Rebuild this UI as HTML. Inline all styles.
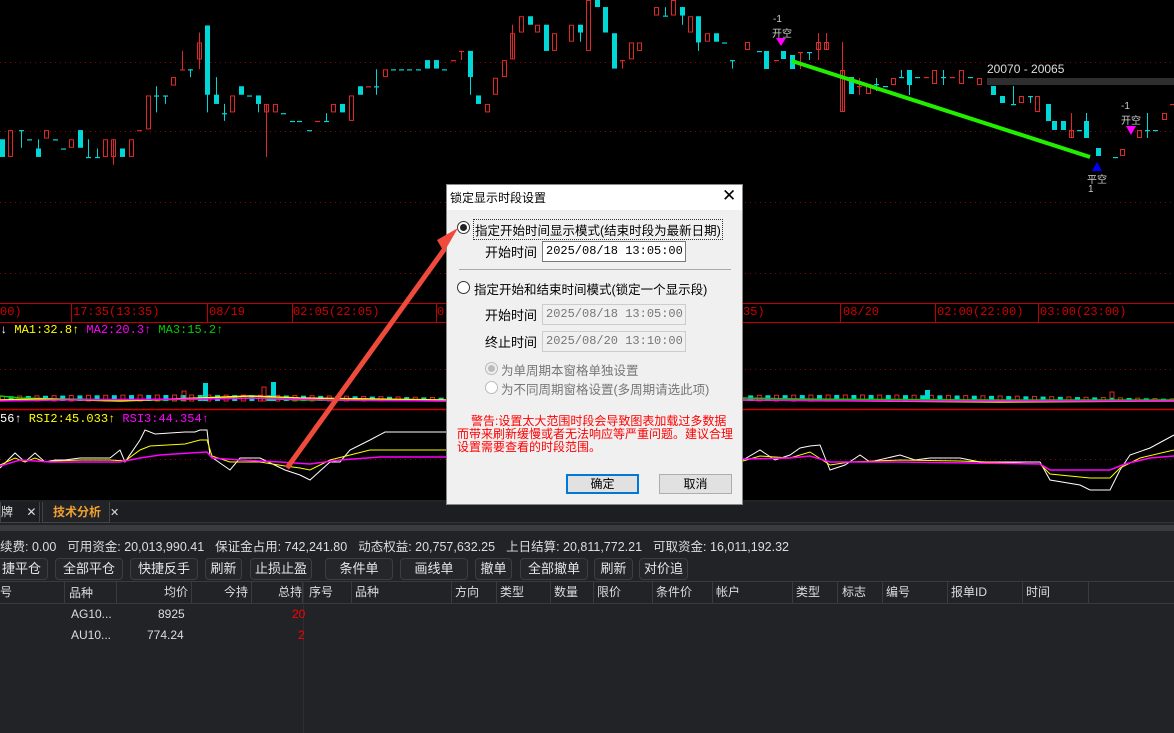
<!DOCTYPE html>
<html><head><meta charset="utf-8">
<style>
*{margin:0;padding:0;box-sizing:border-box}
body{width:1174px;height:733px;overflow:hidden;background:#000;position:relative;font-family:"Liberation Sans","Noto Sans CJK SC",sans-serif}
.a{position:absolute;white-space:nowrap}
.m{font-family:"Liberation Mono","Noto Sans CJK SC",monospace;font-size:12px}
#bot{position:absolute;left:0;top:500px;width:1174px;height:233px;background:#222327}
.btn{position:absolute;top:558px;height:22px;border:1px solid #3d3e42;border-radius:4px;background:#25262a;color:#e6e6e6;font-size:13px;text-align:center;line-height:20px}
.th{position:absolute;top:582px;height:21px;color:#ddd;font-size:12px;line-height:20px;border-right:1px solid #3a3b3f}
.dlg{position:absolute;left:446px;top:184px;width:297px;height:321px;background:#f0f0f0;border:1px solid #888}
.dt{font-size:13px;color:#000}
.inp{position:absolute;height:21px;border:1px solid #7a7a7a;background:#fff;font-family:"Liberation Mono",monospace;font-size:12px;line-height:19px;padding-left:3px}
.dis{border-color:#ccc;background:#f0f0f0;color:#777}
</style></head><body>
<svg id="ch" class="a" style="left:0;top:0" width="1174" height="500" xmlns="http://www.w3.org/2000/svg">
<g stroke="#8b0000" stroke-dasharray="1,4" stroke-width="1">
<line x1="0" y1="62.5" x2="1174" y2="62.5"/><line x1="0" y1="131.5" x2="1174" y2="131.5"/>
<line x1="0" y1="202.5" x2="1174" y2="202.5"/><line x1="0" y1="273.5" x2="1174" y2="273.5"/>
<line x1="0" y1="369.5" x2="1174" y2="369.5"/><line x1="0" y1="459.5" x2="1174" y2="459.5"/>
</g>
<g stroke="#c00000" stroke-width="1">
<line x1="0" y1="303.5" x2="1174" y2="303.5"/><line x1="0" y1="322.5" x2="1174" y2="322.5"/>
<line x1="71.5" y1="303" x2="71.5" y2="322"/><line x1="207.5" y1="303" x2="207.5" y2="322"/>
<line x1="292.5" y1="303" x2="292.5" y2="322"/><line x1="436.5" y1="303" x2="436.5" y2="322"/>
<line x1="840.5" y1="303" x2="840.5" y2="322"/><line x1="935.5" y1="303" x2="935.5" y2="322"/>
<line x1="1038.5" y1="303" x2="1038.5" y2="322"/>
</g>
<line x1="0" y1="409.5" x2="1174" y2="409.5" stroke="#d00000" stroke-width="1.5"/>
<g id="cd"></g>
<g id="vol"></g>
<rect x="987" y="78" width="187" height="7" fill="#2e2e2e"/>
<line x1="792" y1="61" x2="1090" y2="157" stroke="#22ee00" stroke-width="4"/>
<polygon points="776,38 786,38 781,46" fill="#ff00ff"/>
<polygon points="1126,126 1136,126 1131,135" fill="#ff00ff"/>
<polygon points="1092,171 1102,171 1097,162" fill="#0000ff"/>
<polyline fill="none" stroke="#fff" stroke-width="1" points="0,468 15,453 25,462 35,453 45,462 55,460 65,460 80,458 95,458 110,458 120,450 125,462 140,440 145,430 155,434 185,432 195,432 200,430 207,430 210,456 230,470 240,458 260,458 285,470 300,475 310,480 330,462 340,462 350,450 370,440 385,432 446,432"/>
<polyline fill="none" stroke="#ffff00" stroke-width="1" points="0,465 15,458 25,462 35,458 45,462 55,461 80,460 110,460 125,461 140,450 150,446 185,444 200,440 207,440 212,456 230,462 260,462 285,466 300,468 310,470 330,460 350,455 370,450 446,450"/>
<polyline fill="none" stroke="#ff00ff" stroke-width="1.5" points="0,466 20,460 50,462 90,462 120,462 140,458 160,455 190,453 207,452 212,458 240,460 280,462 310,464 340,460 380,457 446,457"/>
<polyline fill="none" stroke="#fff" stroke-width="1" points="743,460 760,450 775,460 790,455 800,448 810,446 820,445 830,470 845,465 860,455 870,462 900,455 915,460 930,458 960,458 980,462 1040,462 1050,480 1080,485 1090,490 1110,490 1120,470 1130,455 1150,448 1174,435"/>
<polyline fill="none" stroke="#ffff00" stroke-width="1" points="743,461 760,456 790,458 810,452 830,465 850,462 900,460 960,461 1040,464 1050,474 1090,478 1110,478 1120,468 1140,458 1174,450"/>
<polyline fill="none" stroke="#ff00ff" stroke-width="1.5" points="743,459 790,458 810,456 830,462 900,462 1040,464 1050,470 1110,470 1125,464 1150,458 1174,456"/>
<line x1="287" y1="468" x2="446" y2="247" stroke="#ef4a3c" stroke-width="5"/>
</svg>
<div class="a m" style="left:0;top:305px;color:#d00000">00)</div>
<div class="a m" style="left:73px;top:305px;color:#d00000">17:35(13:35)</div>
<div class="a m" style="left:209px;top:305px;color:#d00000">08/19</div>
<div class="a m" style="left:293px;top:305px;color:#d00000">02:05(22:05)</div>
<div class="a m" style="left:437px;top:305px;color:#d00000">0</div>
<div class="a m" style="left:743px;top:305px;color:#d00000">35)</div>
<div class="a m" style="left:843px;top:305px;color:#d00000">08/20</div>
<div class="a m" style="left:937px;top:305px;color:#d00000">02:00(22:00)</div>
<div class="a m" style="left:1040px;top:305px;color:#d00000">03:00(23:00)</div>
<div class="a m" style="left:0;top:323px"><span style="color:#fff">↓</span><span style="color:#ff0"> MA1:32.8↑</span><span style="color:#f0f"> MA2:20.3↑</span><span style="color:#0c0"> MA3:15.2↑</span></div>
<div class="a m" style="left:0;top:412px"><span style="color:#fff">56↑</span><span style="color:#ff0"> RSI2:45.033↑</span><span style="color:#f0f"> RSI3:44.354↑</span></div>
<div class="a" style="left:987px;top:62px;color:#ddd;font-size:12px;font-family:'Liberation Sans',sans-serif">20070 - 20065</div>
<div class="a" style="left:773px;top:14px;color:#ccc;font-size:10px">-1</div>
<div class="a" style="left:772px;top:25px;color:#ccc;font-size:10px">开空</div>
<div class="a" style="left:1121px;top:101px;color:#ccc;font-size:10px">-1</div>
<div class="a" style="left:1121px;top:112px;color:#ccc;font-size:10px">开空</div>
<div class="a" style="left:1087px;top:171px;color:#ccc;font-size:10px">平空</div>
<div class="a" style="left:1088px;top:184px;color:#ccc;font-size:10px">1</div>

<div id="bot"></div>
<div class="a" style="left:0;top:502px;width:1174px;height:21px;background:#1d1e21;border-bottom:1px solid #333"></div>
<div class="a" style="left:0;top:502px;width:40px;height:21px;border:1px solid #444;border-top:none;color:#ddd;font-size:12px;line-height:20px">牌 <span style="margin-left:10px">✕</span></div>
<div class="a" style="left:42px;top:502px;width:68px;height:21px;border:1px solid #444;border-top:none;color:#f0a030;font-size:12px;font-weight:bold;line-height:20px;padding-left:10px;width:68px;background:#222327">技术分析</div>
<div class="a" style="left:110px;top:506px;color:#ddd;font-size:11px">✕</div>
<div class="a" style="left:0;top:525px;width:1174px;height:6px;background:#3a3b3f"></div>
<div class="a" style="left:0;top:536px;color:#ddd;font-size:12.5px;word-spacing:0">续费: 0.00<span style="margin-left:11px">可用资金: 20,013,990.41</span><span style="margin-left:11px">保证金占用: 742,241.80</span><span style="margin-left:11px">动态权益: 20,757,632.25</span><span style="margin-left:11px">上日结算: 20,811,772.21</span><span style="margin-left:11px">可取资金: 16,011,192.32</span></div>
<div class="btn" style="left:-5px;width:53px">捷平仓</div>
<div class="btn" style="left:55px;width:68px">全部平仓</div>
<div class="btn" style="left:130px;width:68px">快捷反手</div>
<div class="btn" style="left:205px;width:37px">刷新</div>
<div class="btn" style="left:250px;width:62px">止损止盈</div>
<div class="btn" style="left:325px;width:68px">条件单</div>
<div class="btn" style="left:400px;width:68px">画线单</div>
<div class="btn" style="left:475px;width:37px">撤单</div>
<div class="btn" style="left:520px;width:68px">全部撤单</div>
<div class="btn" style="left:594px;width:39px">刷新</div>
<div class="btn" style="left:639px;width:49px">对价追</div>
<div class="a" style="left:0;top:581px;width:1174px;height:1px;background:#3a3b3f"></div>
<div class="a" style="left:0;top:603px;width:1174px;height:1px;background:#3a3b3f"></div>
<div class="a" style="left:303px;top:581px;width:1px;height:152px;background:#2e2f33"></div>
<div class="th" style="left:0;width:65px">号</div>
<div class="a" style="left:69px;top:584px;color:#ddd;font-size:12px">品种</div>
<div class="th" style="left:65px;width:52px;color:transparent">.</div>
<div class="th" style="left:117px;width:75px;text-align:right;padding-right:3px">均价</div>
<div class="th" style="left:192px;width:60px;text-align:right;padding-right:3px">今持</div>
<div class="th" style="left:252px;width:51px;text-align:right;padding-right:0">总持</div>
<div class="th" style="left:306px;width:46px;padding-left:3px">序号</div>
<div class="th" style="left:352px;width:100px;padding-left:3px">品种</div>
<div class="th" style="left:452px;width:45px;padding-left:3px">方向</div>
<div class="th" style="left:497px;width:54px;padding-left:3px">类型</div>
<div class="th" style="left:551px;width:43px;padding-left:3px">数量</div>
<div class="th" style="left:594px;width:59px;padding-left:3px">限价</div>
<div class="th" style="left:653px;width:60px;padding-left:3px">条件价</div>
<div class="th" style="left:713px;width:80px;padding-left:3px">帐户</div>
<div class="th" style="left:793px;width:45px;padding-left:3px">类型</div>
<div class="th" style="left:838px;width:45px;padding-left:4px">标志</div>
<div class="th" style="left:883px;width:65px;padding-left:3px">编号</div>
<div class="th" style="left:948px;width:75px;padding-left:3px">报单ID</div>
<div class="th" style="left:1023px;width:66px;padding-left:3px">时间</div>
<div class="a" style="left:71px;top:607px;color:#ddd;font-size:12px">AG10...</div>
<div class="a" style="left:158px;top:607px;color:#ddd;font-size:12px">8925</div>
<div class="a" style="left:292px;top:607px;color:#f00;font-size:12px">20</div>
<div class="a" style="left:71px;top:628px;color:#ddd;font-size:12px">AU10...</div>
<div class="a" style="left:147px;top:628px;color:#ddd;font-size:12px">774.24</div>
<div class="a" style="left:298px;top:628px;color:#f00;font-size:12px">2</div>

<div class="dlg">
<div class="a" style="left:0;top:0;width:295px;height:25px;background:#fff"></div>
<div class="a dt" style="left:3px;top:4px;font-size:12px">锁定显示时段设置</div>
<div class="a" style="left:275px;top:1px;font-size:17px;color:#000">✕</div>
<div class="a" style="left:10px;top:36px;width:13px;height:13px;border:1px solid #333;border-radius:50%;background:#fff"><div style="margin:2px;width:7px;height:7px;border-radius:50%;background:#222"></div></div>
<div class="a dt" style="left:26px;top:34px;border:1px dotted #333;padding:0 1px;font-size:12.5px">指定开始时间显示模式(结束时段为最新日期)</div>
<div class="a dt" style="left:38px;top:57px">开始时间</div>
<div class="inp" style="left:95px;top:56px;width:144px">2025/08/18 13:05:00</div>
<div class="a" style="left:12px;top:84px;width:272px;height:1px;background:#aaa"></div>
<div class="a" style="left:10px;top:96px;width:13px;height:13px;border:1px solid #333;border-radius:50%;background:#fff"></div>
<div class="a dt" style="left:27px;top:94px;font-size:12.5px">指定开始和结束时间模式(锁定一个显示段)</div>
<div class="a dt" style="left:38px;top:120px">开始时间</div>
<div class="inp dis" style="left:95px;top:119px;width:144px">2025/08/18 13:05:00</div>
<div class="a dt" style="left:38px;top:147px">终止时间</div>
<div class="inp dis" style="left:95px;top:146px;width:144px">2025/08/20 13:10:00</div>
<div class="a" style="left:38px;top:177px;width:13px;height:13px;border:1px solid #bbb;border-radius:50%;background:#eee"><div style="margin:2px;width:7px;height:7px;border-radius:50%;background:#bbb"></div></div>
<div class="a dt" style="left:54px;top:175px;color:#777;font-size:12.5px">为单周期本窗格单独设置</div>
<div class="a" style="left:38px;top:196px;width:13px;height:13px;border:1px solid #bbb;border-radius:50%;background:#fff"></div>
<div class="a dt" style="left:54px;top:194px;color:#777;font-size:12.5px">为不同周期窗格设置(多周期请选此项)</div>
<div class="a" style="left:10px;top:230px;width:280px;color:#f00;font-size:12px;line-height:13px;white-space:normal;text-indent:14px">警告:设置太大范围时段会导致图表加载过多数据而带来刷新缓慢或者无法响应等严重问题。建议合理设置需要查看的时段范围。</div>
<div class="a" style="left:119px;top:289px;width:73px;height:20px;border:2px solid #0078d7;background:#e1e1e1;font-size:12px;text-align:center;line-height:16px">确定</div>
<div class="a" style="left:212px;top:289px;width:73px;height:20px;border:1px solid #adadad;background:#e1e1e1;font-size:12px;text-align:center;line-height:18px">取消</div>
</div>
<svg class="a" style="left:0;top:0" width="1174" height="500"><polygon points="458,228 444,252 437,240" fill="#ef4a3c"/></svg>

<script>
var NS="http://www.w3.org/2000/svg",g=document.getElementById("cd");
function R(x,y,w,h,f,s){var r=document.createElementNS(NS,"rect");r.setAttribute("x",x);r.setAttribute("y",y);r.setAttribute("width",w);r.setAttribute("height",h);if(s){r.setAttribute("fill","none");r.setAttribute("stroke",f);}else r.setAttribute("fill",f);return r;}
function L(x1,y1,x2,y2,c,p){var l=document.createElementNS(NS,"line");l.setAttribute("x1",x1);l.setAttribute("y1",y1);l.setAttribute("x2",x2);l.setAttribute("y2",y2);l.setAttribute("stroke",c);p.appendChild(l);}
var C="#00d8d8",Rd="#e02828";
function cand(x,t,b,wt,wb,c,k){t*=k;b*=k;wt=wt*k;wb=wb*k;
 if(wt<t||wb>b)L(x+0.5,wt,x+0.5,wb,c,g);
 if(b-t<2){g.appendChild(R(x-2,t,5,1.2,c));}
 else if(c==C)g.appendChild(R(x-2,t,5,b-t,c));
 else g.appendChild(R(x-1.5,t+0.5,4,b-t-1,c,1));}
var k=0.707;
var left=[[2,197,222,197,222,C],[10,184,222,184,222,Rd],[21,184,184,184,209,C],[29,197,197,197,197,C],[38,210,222,197,222,C],[46,184,196,184,196,Rd],[55,197,197,197,197,C],[63,210,210,210,210,C],[71,197,209,197,209,Rd],[80,184,209,184,209,C],[88,222,222,197,222,C],[97,222,222,210,222,C],[105,197,222,197,222,Rd],[113,197,222,197,233,Rd],[122,210,222,210,222,C],[131,197,222,197,222,Rd],[139,184,184,184,184,Rd],[148,135,183,135,183,Rd],[156,135,135,122,159,C],[165,135,135,135,147,C],[173,109,121,109,121,Rd],[182,98,98,72,98,Rd],[190,98,98,98,109,C],[199,60,84,46,98,Rd],[207,36,134,36,159,C],[216,134,147,109,147,C],[224,160,160,147,171,C],[232,135,159,135,159,Rd],[241,122,134,122,134,C],[249,135,135,135,135,C],[258,135,147,135,159,C],[266,147,159,147,222,Rd],[275,147,159,147,159,Rd],[283,160,160,160,160,C],[292,171,171,171,171,C],[299,171,171,171,171,C],[309,184,184,184,184,C],[317,171,171,171,171,Rd],[326,171,171,160,171,C],[333,147,159,147,159,Rd],[342,147,159,147,159,C],[351,135,171,135,171,Rd],[360,122,134,122,134,C],[368,122,122,122,122,Rd],[376,122,122,98,134,C],[385,98,109,98,109,Rd],[393,98,98,98,98,C],[401,98,98,98,98,C],[409,98,98,98,98,C],[418,98,98,98,98,C],[427,85,97,85,97,C],[436,85,97,85,97,C],[444,98,98,98,98,C],[453,85,85,85,85,Rd],[461,72,72,72,85,Rd],[470,72,109,72,134,C],[478,135,147,135,147,C],[487,147,159,147,159,Rd],[495,110,134,110,134,Rd],[504,85,109,85,109,Rd],[512,47,84,35,84,Rd],[521,23,46,23,46,Rd],[530,23,35,23,35,C],[537,35,46,35,46,Rd],[546,35,72,35,72,C],[554,47,72,47,72,Rd],[571,35,59,35,59,Rd],[580,35,46,35,59,C],[588,0,72,0,72,Rd],[597,0,10,0,10,C],[605,10,46,10,46,C],[614,47,97,47,97,C],[622,85,85,85,97,Rd],[631,60,84,60,84,Rd],[639,60,72,60,72,Rd],[656,10,22,10,22,Rd],[665,22,22,10,22,C],[673,0,22,0,22,Rd],[682,10,22,10,35,C],[690,23,46,23,46,Rd],[698,23,60,23,72,C],[707,47,59,47,59,Rd],[716,47,59,47,59,C],[724,60,60,60,60,C],[732,85,85,85,97,C]];
left.forEach(function(d){cand(d[0],d[1],d[2],d[3],d[4],d[5],k)});
var right=[[747,42,50,42,50,Rd],[759,51,51,51,51,C],[766,51,69,51,69,C],[776,60,60,60,60,Rd],[783,51,59,51,59,C],[792,55,69,55,69,C],[800,52,52,52,69,Rd],[809,52,52,52,60,C],[818,42,50,33,60,Rd],[826,42,50,33,50,Rd],[842,70,112,42,112,Rd],[851,77,94,77,94,C],[859,86,86,78,95,Rd],[868,84,94,84,94,Rd],[876,84,84,78,91,C],[885,86,86,86,86,C],[893,78,85,78,85,Rd],[901,77,77,70,77,C],[909,70,85,70,95,C],[917,77,77,77,77,C],[926,77,77,77,77,Rd],[934,70,84,70,84,Rd],[943,77,77,70,85,C],[952,77,77,77,77,Rd],[961,70,84,70,84,Rd],[970,77,77,77,77,C],[979,78,85,78,85,Rd],[993,86,95,86,95,C],[1002,96,103,96,103,C],[1013,104,104,86,104,C],[1021,96,103,96,103,Rd],[1030,96,96,96,103,C],[1037,96,112,96,112,Rd],[1048,104,121,104,121,C],[1054,121,130,121,130,C],[1063,121,130,121,130,C],[1071,130,138,113,138,Rd],[1079,130,130,130,130,C],[1086,121,138,113,138,C],[1098,148,156,148,156,C],[1115,157,157,157,157,C],[1122,149,156,149,156,Rd],[1139,130,138,130,138,Rd],[1147,130,130,113,138,C],[1155,130,130,130,130,C],[1164,113,120,113,120,Rd],[1172,104,104,104,104,Rd]];
right.forEach(function(d){cand(d[0],d[1],d[2],d[3],d[4],d[5],1)});
var v=document.getElementById("vol");
for(var x=2;x<1174;x+=8.6){if(x>446&&x<743)continue;var h=2+Math.abs(Math.sin(x*0.37))*4;var c=(Math.floor(x/8.6)%2)?C:Rd;if(c==C)v.appendChild(R(x-2,401-h,5,h,c));else v.appendChild(R(x-1.5,401-h,4,h,c,1));}
[[205,383],[273,382],[927,390]].forEach(function(p){v.appendChild(R(p[0]-2,p[1],5,401-p[1],C));});
v.appendChild(R(182,391,4,10,Rd,1));v.appendChild(R(262,387,4,14,Rd,1));v.appendChild(R(1110,392,4,9,Rd,1));
var pl=[["#0c0","0,396 20,398 60,399 150,400 250,398 300,400 446,401 743,398 800,399 1000,400 1174,400"],["#ff0","0,400 40,399 120,401 200,398 250,396 300,398 446,400 743,400 1000,402 1174,401"],["#f0f","0,401 60,400 200,399 260,398 330,400 446,401 743,400 900,401 1174,401"]];
pl.forEach(function(p){var e=document.createElementNS(NS,"polyline");e.setAttribute("points",p[1]);e.setAttribute("fill","none");e.setAttribute("stroke",p[0]);e.setAttribute("stroke-width","1.5");v.appendChild(e);});
</script>
</body></html>
